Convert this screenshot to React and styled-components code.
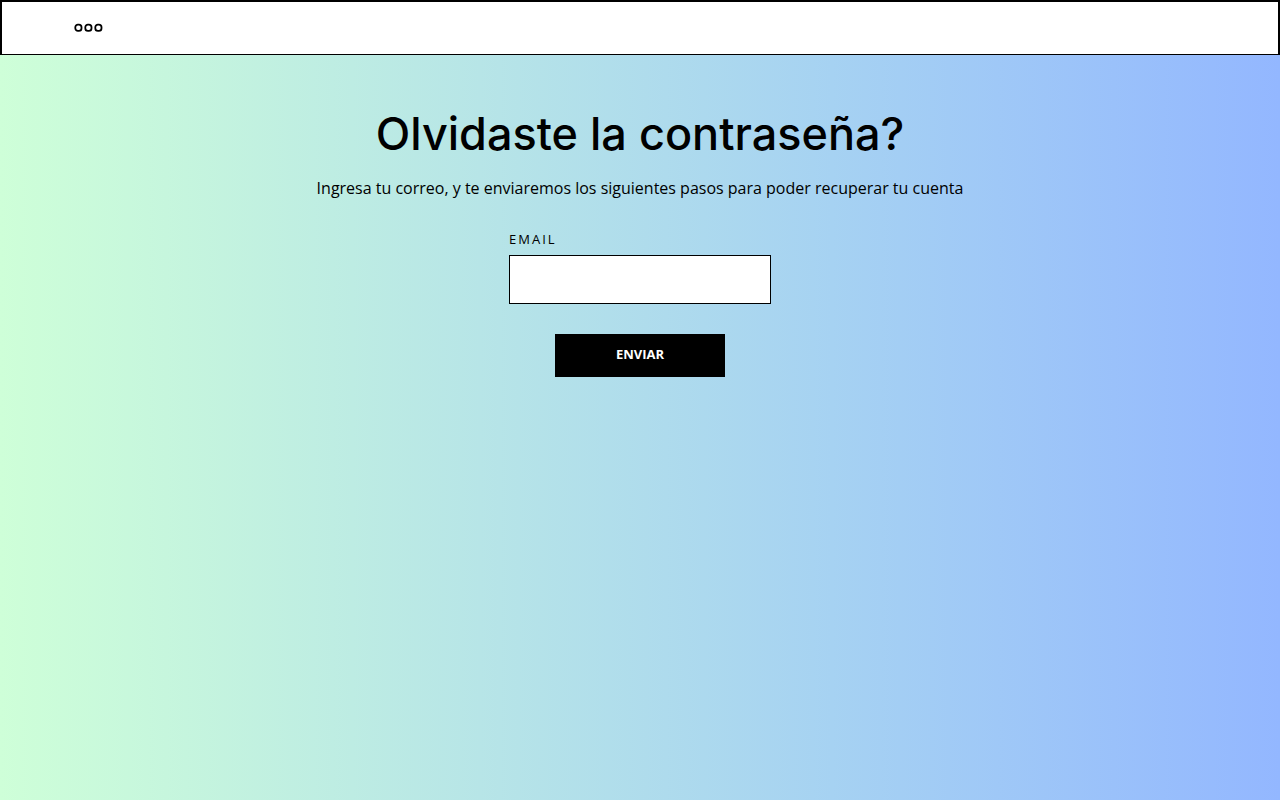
import React from "react";
import styled, { createGlobalStyle } from "styled-components";

const GlobalStyle = createGlobalStyle`
  *, *::before, *::after { box-sizing: border-box; }
  body {
    margin: 0;
    color: #000;
    font-family: "Open Sans", "Liberation Sans", sans-serif;
  }
`;

const Page = styled.div`
  display: flex;
  flex-direction: column;
  min-height: 100vh;
  background: linear-gradient(90deg, #ceffd8 0%, #a6d2f2 65%, #93b7ff 100%);
`;

const TopBar = styled.header`
  display: flex;
  align-items: center;
  padding: 21px 72px;
  background: #fff;
  border: 2px solid #000;
  border-bottom-width: 1px;
`;

const MenuButton = styled.button`
  display: flex;
  padding: 0;
  border: 0;
  background: none;
  cursor: pointer;
`;

const Main = styled.main`
  display: flex;
  flex-direction: column;
  align-items: center;
  padding: 47px 24px;
`;

const Title = styled.h1`
  margin: 0;
  font-family: Inter, "Liberation Sans", sans-serif;
  font-size: 45px;
  font-weight: 500;
  line-height: 64px;
  text-align: center;
`;

const Intro = styled.p`
  margin: 10px 0 0;
  font-size: 16px;
  line-height: 24px;
  text-align: center;
`;

const Form = styled.form`
  display: flex;
  flex-direction: column;
  align-items: center;
  gap: 30px;
  margin-top: 29px;
`;

const Field = styled.div`
  display: flex;
  flex-direction: column;
  gap: 6px;
`;

const Label = styled.label`
  font-size: 13px;
  line-height: 20px;
  letter-spacing: 2px;
  text-transform: uppercase;
`;

const Input = styled.input`
  width: 262px;
  height: 49px;
  padding: 0 12px;
  border: 1px solid #000;
  border-radius: 0;
  background: #fff;
  font: inherit;
`;

const SubmitButton = styled.button`
  width: 170px;
  height: 43px;
  padding: 0 0 4px;
  border: 0;
  background: #000;
  color: #fff;
  font-family: inherit;
  font-size: 13px;
  font-weight: 700;
  line-height: 20px;
  cursor: pointer;
`;

const rings = [1, 11, 21];

export default function App() {
  return (
    <>
      <GlobalStyle />
      <Page>
        <TopBar>
          <MenuButton type="button" aria-label="Menú">
            <svg width="29" height="10" viewBox="0 0 29 10" fill="none" stroke="#000" strokeWidth="1.8">
              {rings.map((x) => (
                <rect key={x} x={x + 0.3} y="1.6" width="6.2" height="6.2" rx="2.6" />
              ))}
            </svg>
          </MenuButton>
        </TopBar>
        <Main>
          <Title>Olvidaste la contraseña?</Title>
          <Intro>Ingresa tu correo, y te enviaremos los siguientes pasos para poder recuperar tu cuenta</Intro>
          <Form onSubmit={(event) => event.preventDefault()}>
            <Field>
              <Label htmlFor="email">Email</Label>
              <Input id="email" type="email" name="email" />
            </Field>
            <SubmitButton type="submit">ENVIAR</SubmitButton>
          </Form>
        </Main>
      </Page>
    </>
  );
}
